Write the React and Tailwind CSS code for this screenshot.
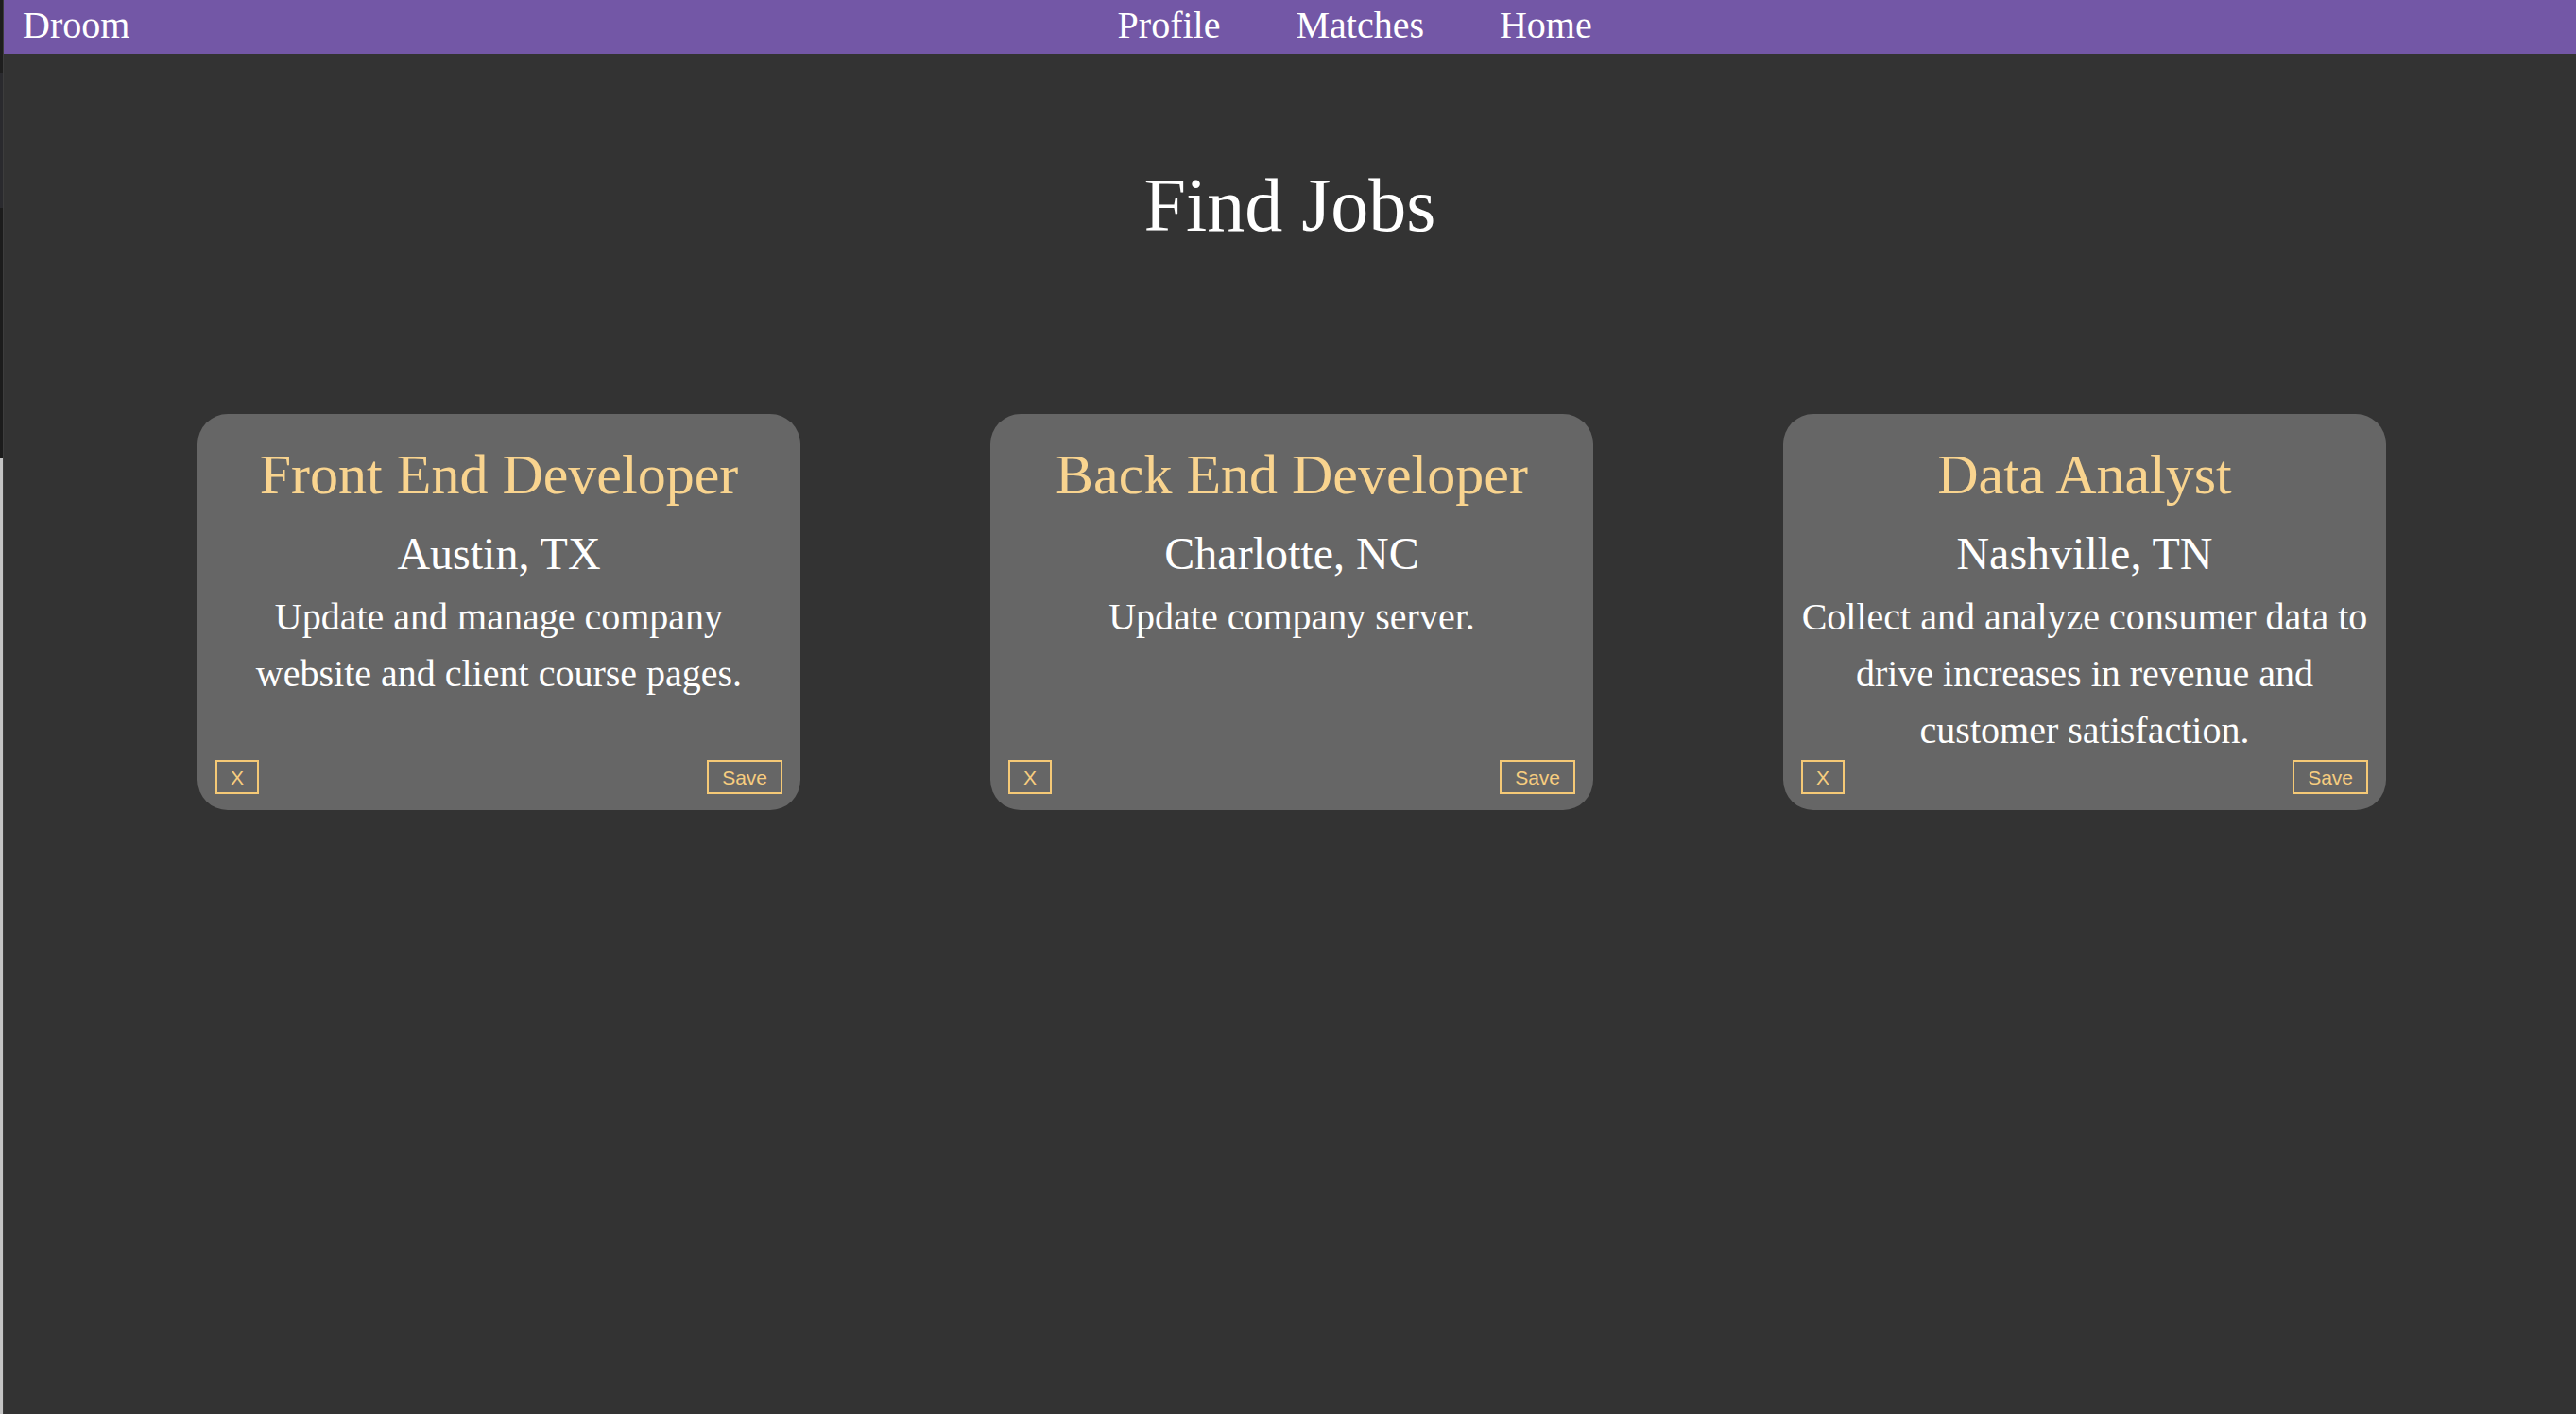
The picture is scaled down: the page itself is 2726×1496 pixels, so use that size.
const jobs = [
  {
    title: 'Front End Developer',
    location: 'Austin, TX',
    description: 'Update and manage company website and client course pages.',
  },
  {
    title: 'Back End Developer',
    location: 'Charlotte, NC',
    description: 'Update company server.',
  },
  {
    title: 'Data Analyst',
    location: 'Nashville, TN',
    description: 'Collect and analyze consumer data to drive increases in revenue and customer satisfaction.',
  },
]

function JobCard({ job }) {
  return (
    <div className="w-[638px] h-[419px] rounded-[32px] bg-[#666666] flex flex-col items-center text-center px-[18px] pt-[30px] pb-[17px]">
      <h2 className="text-[60px] leading-[69px] text-[#f9d48f] font-normal">{job.title}</h2>
      <h3 className="mt-[21px] text-[48px] leading-[55px] text-white font-normal">{job.location}</h3>
      <p className="mt-[10px] text-[40px] leading-[60px] text-white">{job.description}</p>
      <div className="mt-auto w-full flex justify-between px-px font-['Liberation_Sans',Arial,sans-serif]">
        <button className="h-[36px] px-[14px] border-2 border-[#f5c976] text-[#f7cd7f] text-[21px] leading-none">
          X
        </button>
        <button className="h-[36px] px-[14px] border-2 border-[#f5c976] text-[#f7cd7f] text-[21px] leading-none">
          Save
        </button>
      </div>
    </div>
  )
}

export default function App() {
  return (
    <div className="flex min-h-[1496px] font-['Liberation_Serif','Times_New_Roman',serif]">

      {/* Rand eines Fensters dahinter */}
      <div className="w-[4px] shrink-0 flex flex-col border-r border-[#3d3d3d]" aria-hidden="true">
        <div className="h-[77px] bg-[#1e1e1e]" />
        <div className="h-[143px] bg-[#2a2a2e]" />
        <div className="h-[265px] bg-[#1c1c1c]" />
        <div className="flex-1 bg-[#c4c4c4]" />
      </div>

      <div className="flex-1 bg-[#333333]">
        <nav className="h-[57px] bg-[#7357a6] flex items-center justify-between pl-[20px] pb-[3px] text-white text-[40px] leading-[46px]">
          <span>Droom</span>
          <div className="flex gap-[80px] pl-[4px]">
            <a href="#profile">Profile</a>
            <a href="#matches">Matches</a>
            <a href="#home">Home</a>
          </div>
          <span />
        </nav>

        <h1 className="mt-[114px] text-center text-white text-[80px] leading-[92px] font-normal">Find Jobs</h1>

        <div className="mt-[175px] pl-[4px] flex justify-evenly">
          {jobs.map((job) => (
            <JobCard key={job.title} job={job} />
          ))}
        </div>
      </div>
    </div>
  )
}
